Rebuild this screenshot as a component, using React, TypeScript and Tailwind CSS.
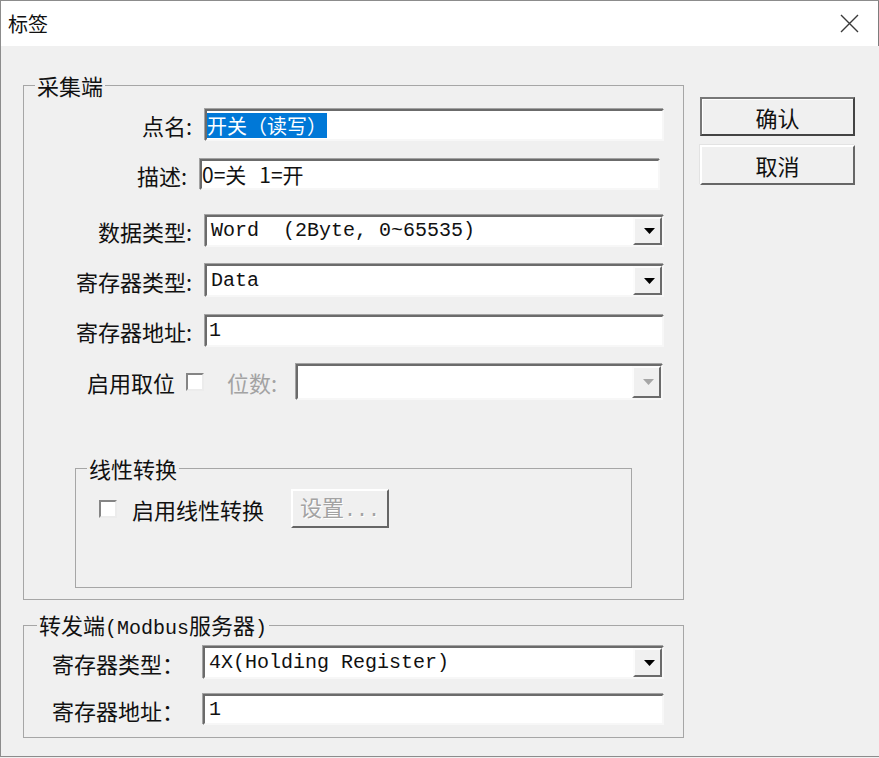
import type { ReactNode } from 'react'

/* 标签 dialog: classic Windows look, scaled up */

const MONO = "font-['Liberation_Mono','Noto_Sans_CJK_SC',monospace]"

const Sunken = ({
  children,
  className = '',
}: {
  children?: ReactNode
  className?: string
}) => (
  <div
    className={`flex shrink-0 items-center overflow-hidden border-2 border-b-[#f7f7f7] border-l-[#6b6b6b] border-r-[#f7f7f7] border-t-[#6b6b6b] bg-white shadow-[-1px_-1px_0_#a3a3a3] ${className}`}
  >
    {children}
  </div>
)

const DropButton = ({ disabled = false }: { disabled?: boolean }) => (
  <div className="flex w-[29px] shrink-0 items-center justify-center self-stretch border-2 border-b-[#6b6b6b] border-l-[#fcfcfc] border-r-[#6b6b6b] border-t-[#fcfcfc] bg-[#f0f0f0] pl-[3px]">
    <svg width="11" height="6" viewBox="0 0 11 6">
      <path d="M0 0H11L5.5 6Z" fill={disabled ? '#a6a6a6' : '#000'} />
    </svg>
  </div>
)

const Select = ({
  value = '',
  className = '',
  disabled = false,
}: {
  value?: string
  className?: string
  disabled?: boolean
}) => (
  <Sunken className={className}>
    <span
      className={`min-w-0 flex-1 truncate whitespace-pre pl-[4px] text-[20px] leading-[24px] ${MONO}`}
    >
      {value}
    </span>
    <DropButton disabled={disabled} />
  </Sunken>
)

const Label = ({
  children,
  className = '',
}: {
  children: ReactNode
  className?: string
}) => (
  <span className={`shrink-0 text-[22px] leading-[26px] ${className}`}>
    {children}
  </span>
)

const Check = () => (
  <span className="block h-[18px] w-[18px] shrink-0 border-2 border-b-[#ececec] border-l-[#858585] border-r-[#ececec] border-t-[#858585] bg-white" />
)

const Legend = ({
  children,
  className = '',
}: {
  children: ReactNode
  className?: string
}) => (
  <legend className={`px-[2px] text-[22px] leading-[24px] ${className}`}>
    {children}
  </legend>
)

const DlgButton = ({
  children,
  isDefault = false,
  className = '',
}: {
  children: ReactNode
  isDefault?: boolean
  className?: string
}) => (
  <button
    className={`flex w-[155px] items-center justify-center border-2 bg-[#f0f0f0] text-[22px] leading-[26px] ${
      isDefault
        ? 'border-[#777] border-b-[#444] border-r-[#444] shadow-[inset_1px_1px_0_#fff]'
        : 'border-b-[#666] border-l-[#fff] border-r-[#666] border-t-[#fff] shadow-[-1px_-1px_0_#e3e3e3]'
    } ${className}`}
  >
    {children}
  </button>
)

export default function App() {
  return (
    <div className="h-[758px] w-[879px] bg-[#f0f0f0] font-['Noto_Sans_CJK_SC',sans-serif] text-[#111]">
      <div className="flex h-[757px] flex-col border-b border-l border-t border-[#8c8c8c]">
        {/* title bar */}
        <div className="flex h-[45px] shrink-0 items-center border-r border-[#7d7d7d] bg-white pl-[7px]">
          <span className="text-[20px] leading-[24px]">标签</span>
          <svg
            className="ml-auto mr-[19px]"
            width="19"
            height="19"
            viewBox="0 0 19 19"
          >
            <path
              d="M1 1L18 18M18 1L1 18"
              stroke="#3a3a3a"
              strokeWidth="1.4"
              fill="none"
            />
          </svg>
        </div>

        <div className="flex">
          {/* left column: group boxes */}
          <div className="ml-[22px] w-[661px] shrink-0">
            <fieldset className="mt-[27px] h-[527px] w-[661px] border border-[#a6a6a6]">
              <Legend className="ml-[11px]">采集端</Legend>

              <div className="mt-[12px] flex items-center">
                <Label className="w-[168px] text-right">点名:</Label>
                <Sunken className="ml-[13px] h-[32px] w-[459px]">
                  <span className="bg-[#0078d7] text-[20px] leading-[25px] text-white">
                    开关（读写）
                  </span>
                </Sunken>
              </div>

              <div className="mt-[18px] flex items-center">
                <Label className="w-[163px] text-right">描述:</Label>
                <Sunken className="ml-[13px] h-[31px] w-[460px]">
                  <span className="text-[21px] leading-[25px]">0=关</span>
                  <span className="ml-[13px] text-[21px] leading-[25px]">
                    1=开
                  </span>
                </Sunken>
              </div>

              <div className="mt-[25px] flex items-center">
                <Label className="w-[168px] text-right">数据类型:</Label>
                <Select
                  className="ml-[13px] h-[32px] w-[459px]"
                  value="Word  (2Byte, 0~65535)"
                />
              </div>

              <div className="mt-[17px] flex items-center">
                <Label className="w-[168px] text-right">寄存器类型:</Label>
                <Select className="ml-[13px] h-[33px] w-[459px]" value="Data" />
              </div>

              <div className="mt-[18px] flex items-center">
                <Label className="w-[168px] text-right">寄存器地址:</Label>
                <Sunken className="ml-[13px] h-[32px] w-[459px]">
                  <span
                    className={`pl-[2px] text-[20px] leading-[24px] ${MONO}`}
                  >
                    1
                  </span>
                </Sunken>
              </div>

              <div className="mt-[17px] flex items-center">
                <Label className="ml-[63px]">启用取位</Label>
                <span className="ml-[11px]">
                  <Check />
                </span>
                <Label className="ml-[23px] w-[69px] text-[#a3a3a3]">
                  位数:
                </Label>
                <Select className="h-[36px] w-[367px]" disabled />
              </div>

              <fieldset className="ml-[51px] mt-[56px] h-[132px] w-[557px] border border-[#a6a6a6]">
                <Legend className="ml-[11px]">线性转换</Legend>
                <div className="mt-[9px] flex items-center pl-[23px]">
                  <Check />
                  <Label className="ml-[15px]">启用线性转换</Label>
                  <div className="ml-[27px] flex h-[39px] w-[98px] items-center justify-center border-2 border-b-[#666] border-l-[#fff] border-r-[#666] border-t-[#fff] text-[#a3a3a3] [text-shadow:1px_1px_0_#fff]">
                    <span className="text-[22px] leading-[26px]">
                      设置
                      <span className={`text-[20px] ${MONO}`}>...</span>
                    </span>
                  </div>
                </div>
              </fieldset>
            </fieldset>

            <fieldset className="mt-[12px] h-[126px] w-[661px] border border-[#a6a6a6]">
              <Legend className="ml-[13px] -mt-[2px]">
                转发端
                <span className={`text-[20px] leading-[20px] ${MONO}`}>
                  (Modbus
                </span>
                服务器
                <span className={`text-[20px] leading-[20px] ${MONO}`}>)</span>
              </Legend>
              <div className="mt-[7px] flex items-center pl-[28px]">
                <Label className="w-[151px]">寄存器类型：</Label>
                <Select
                  className="h-[33px] w-[461px]"
                  value="4X(Holding Register)"
                />
              </div>
              <div className="mt-[15px] flex items-center pl-[28px]">
                <Label className="w-[151px]">寄存器地址：</Label>
                <Sunken className="h-[31px] w-[461px]">
                  <span
                    className={`pl-[4px] text-[20px] leading-[24px] ${MONO}`}
                  >
                    1
                  </span>
                </Sunken>
              </div>
            </fieldset>
          </div>

          {/* right column: buttons */}
          <div className="ml-[16px] mt-[51px] flex flex-col">
            <DlgButton isDefault className="h-[39px]">
              确认
            </DlgButton>
            <DlgButton className="mt-[9px] h-[40px]">取消</DlgButton>
          </div>
        </div>
      </div>
    </div>
  )
}
